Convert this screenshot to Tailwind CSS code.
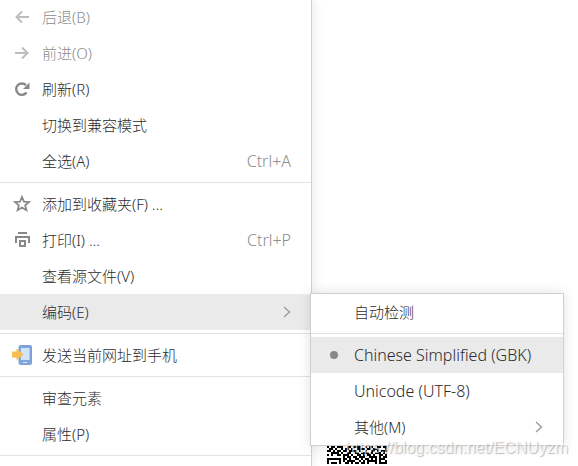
<!DOCTYPE html>
<html lang="zh-CN">
<head>
  <meta charset="UTF-8" />
  <meta name="viewport" content="width=device-width, initial-scale=1.0" />
  <title>右键菜单</title>
  <script src="https://cdn.jsdelivr.net/npm/@tailwindcss/browser@4"></script>
</head>
<body class="relative h-screen overflow-hidden bg-white font-['Noto_Sans','Noto_Sans_CJK_SC',sans-serif] font-light text-[15px] leading-5 text-[#2c2c2c]">

  <!-- Page content behind the menu -->
  <svg id="qr" class="absolute left-[327px] top-[404px] size-[60px]" viewBox="0 0 30 30" shape-rendering="crispEdges" fill="#000" role="img" aria-label="二维码"></svg>

  <!-- Context menu -->
  <div role="menu" class="relative -mt-px min-h-[calc(100vh+1px)] w-[312px] border-r border-[#d0d0d0] bg-white shadow-[2px_0_10px_rgba(0,0,0,0.08)]">
    <button type="button" role="menuitem" disabled class="flex h-9 w-full items-center gap-2 pl-3 pr-5 text-left text-[#8c8c8c]">
      <svg class="h-5 w-[22px]" viewBox="0 0 22 20" fill="none" stroke="#bdbdbd" stroke-width="2"><path d="M17 10H4.500M10 4.500 4.500 10 10 15.500" /></svg>
      <span>后退(B)</span>
    </button>
    <button type="button" role="menuitem" disabled class="flex h-9 w-full items-center gap-2 pl-3 pr-5 text-left text-[#8c8c8c]">
      <svg class="h-5 w-[22px]" viewBox="0 0 22 20" fill="none" stroke="#bdbdbd" stroke-width="2"><path d="M3 10H15.500M10 4.500 15.500 10 10 15.500" /></svg>
      <span>前进(O)</span>
    </button>
    <button type="button" role="menuitem" class="flex h-9 w-full items-center gap-2 pl-3 pr-5 text-left">
      <svg class="h-5 w-[22px]" viewBox="0 0 22 20"><path d="M14.500 13.500A5.700 5.700 0 1 1 14 6.200" fill="none" stroke="#888" stroke-width="2.400" /><path d="M17.500 3.500V10H11Z" fill="#888" /></svg>
      <span>刷新(R)</span>
    </button>
    <button type="button" role="menuitem" class="flex h-9 w-full items-center pl-[42px] pr-5 text-left">切换到兼容模式</button>
    <button type="button" role="menuitem" class="flex h-9 w-full items-center justify-between pl-[42px] pr-5 text-left">
      <span>全选(A)</span>
      <span class="text-base text-[#8c8c8c]">Ctrl+A</span>
    </button>

    <hr class="my-[3px] border-[#e2e2e2]" />

    <button type="button" role="menuitem" class="flex h-9 w-full items-center gap-2 pl-3 pr-5 text-left">
      <svg class="h-5 w-[22px]" viewBox="0 0 22 20" fill="none" stroke="#888" stroke-width="1.800"><path d="M10 3 12 7.600 17 8 13.200 11.300 14.400 16.200 10 13.600 5.600 16.200 6.800 11.300 3 8 8 7.600Z" /></svg>
      <span>添加到收藏夹(F) ...</span>
    </button>
    <button type="button" role="menuitem" class="flex h-9 w-full items-center justify-between pl-3 pr-5 text-left">
      <span class="flex items-center gap-2">
        <svg class="h-5 w-[22px]" viewBox="0 0 22 20" fill="none" stroke="#888" stroke-width="2"><path d="M6 3H15M4 13V7H17V13M8 11H13V16H8Z" /></svg>
        <span>打印(I) ...</span>
      </span>
      <span class="text-base text-[#8c8c8c]">Ctrl+P</span>
    </button>
    <button type="button" role="menuitem" class="flex h-9 w-full items-center pl-[42px] pr-5 text-left">查看源文件(V)</button>

    <div class="relative">
      <button type="button" role="menuitem" aria-haspopup="menu" aria-expanded="true" class="flex h-9 w-full items-center justify-between bg-[#eaeaea] pl-[42px] pr-5 text-left">
        <span>编码(E)</span>
        <svg class="h-3 w-2" viewBox="0 0 8 12" fill="none" stroke="#999" stroke-width="1.300"><path d="M1 1 6.500 6 1 11" /></svg>
      </button>

      <!-- Encoding submenu -->
      <div role="menu" class="absolute -top-px left-full z-10 -ml-px w-[254px] border border-[#d0d0d0] bg-white shadow-[0_0_12px_rgba(0,0,0,0.12)]">
        <button type="button" role="menuitemradio" aria-checked="false" class="flex h-9 w-full items-center pl-[43px] pr-5 text-left">自动检测</button>
        <hr class="my-[3px] border-[#e2e2e2]" />
        <button type="button" role="menuitemradio" aria-checked="true" class="flex h-9 w-full items-center gap-4 bg-[#eaeaea] pl-[19px] text-left text-base">
          <span class="size-2 rounded-full bg-[#888]"></span>
          <span>Chinese Simplified (GBK)</span>
        </button>
        <button type="button" role="menuitemradio" aria-checked="false" class="flex h-9 w-full items-center pl-[43px] pr-5 text-left text-base">Unicode (UTF-8)</button>
        <button type="button" role="menuitem" aria-haspopup="menu" class="flex h-9 w-full items-center justify-between pl-[43px] pr-5 text-left">
          <span>其他(M)</span>
          <svg class="h-3 w-2" viewBox="0 0 8 12" fill="none" stroke="#999" stroke-width="1.300"><path d="M1 1 6.500 6 1 11" /></svg>
        </button>
      </div>
    </div>

    <hr class="my-[3px] border-[#e2e2e2]" />

    <button type="button" role="menuitem" class="flex h-9 w-full items-center gap-2 pl-3 pr-5 text-left">
      <svg class="h-5 w-[22px]" viewBox="0 0 22 20">
        <rect x="7" y="0.500" width="12.500" height="19" rx="1.500" fill="#7fa6dc" stroke="#7c9fd0" />
        <rect x="9" y="3" width="8.500" height="12" fill="#d3e4fa" />
        <rect x="11" y="17" width="4" height="1" fill="#dbe8fa" />
        <path d="M0 6.500H4.500V3.500L11.500 9.500 4.500 15.500V12.500H0Z" fill="#f8bd50" />
      </svg>
      <span>发送当前网址到手机</span>
    </button>

    <hr class="my-[3px] border-[#e2e2e2]" />

    <button type="button" role="menuitem" class="flex h-9 w-full items-center pl-[42px] pr-5 text-left">审查元素</button>
    <button type="button" role="menuitem" class="flex h-9 w-full items-center pl-[42px] pr-5 text-left">属性(P)</button>

    <hr class="my-[3px] border-[#e2e2e2]" />
  </div>

  <!-- Watermark -->
  <p class="pointer-events-none absolute bottom-1.5 right-2.5 z-20 font-['Liberation_Sans',sans-serif] text-base font-normal text-white/70 [text-shadow:1px_1px_1px_rgba(0,0,0,0.25)]">https://blog.csdn.net/ECNUyzm</p>

  <script>
    // Lower rows of the QR code, one character per module
    const rows = [
      '110111011010110001101011110110',
      '101101110011011110010110011011',
      '011010010110100111101101110001',
      '110101101101111010010011010111',
      '001111010011001101111010111010',
      '101001101110100110101101001101',
      '000000001011011011100111101011',
      '111111101101001101011010101110',
      '100000101011110010101111101001',
      '101110100110101101101000101111',
      '101110101101011110011111111010',
    ];
    let d = '';
    rows.forEach((row, y) => {
      [...row].forEach((bit, x) => {
        if (bit === '1') d += `M${x} ${y + 20}h1v1h-1z`;
      });
    });
    document.getElementById('qr').innerHTML = `<path d="${d}" />`;
  </script>

</body>
</html>
